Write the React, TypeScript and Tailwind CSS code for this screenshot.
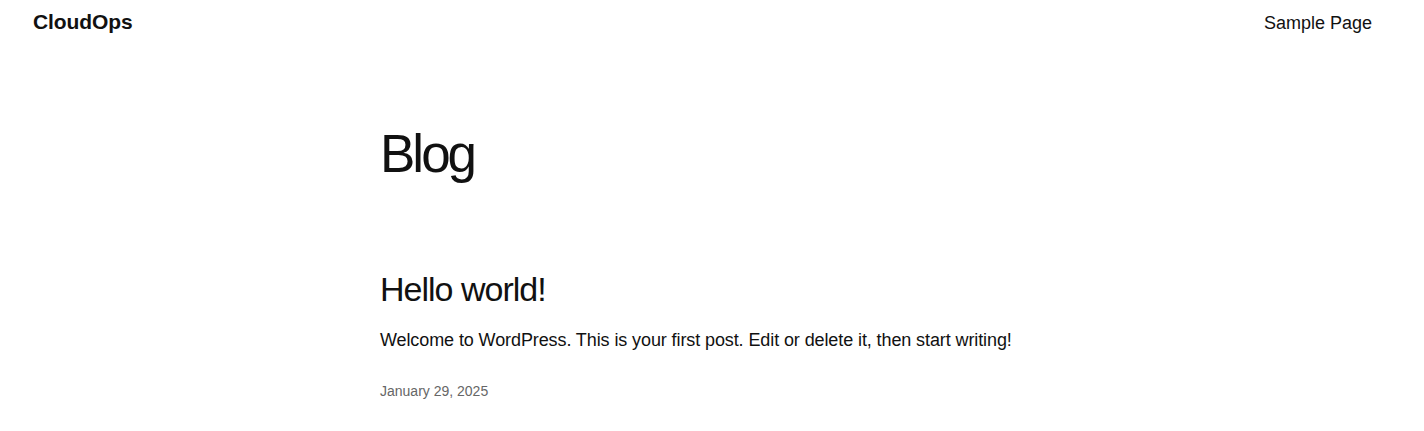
export default function App() {
  return (
    <div className="min-h-[431px] bg-white text-[#111111]" style={{ fontFamily: '"Liberation Sans", Arial, sans-serif' }}>
      <header className="flex items-center justify-between px-[33px] pt-[6px]">
        <a className="text-[21px] font-bold tracking-[-0.1px]">CloudOps</a>
        <nav className="pr-[19px] pt-[3px] text-[18px] font-light">
          <a>Sample Page</a>
        </nav>
      </header>
      <main className="mx-auto w-[664px] pt-[84px]">
        <h1 className="text-[53px] leading-[1.2] tracking-[-3px]">Blog</h1>
        <article className="pt-[84px]">
          <h2 className="text-[34px] leading-[1.2] tracking-[-1px]">Hello world!</h2>
          <p className="mt-[17px] text-[18px] leading-[1.5] tracking-[-0.1px]">
            Welcome to WordPress. This is your first post. Edit or delete it, then start writing!
          </p>
          <div className="mt-[27px] text-[14px] text-[#666666]">January 29, 2025</div>
        </article>
      </main>
    </div>
  );
}
